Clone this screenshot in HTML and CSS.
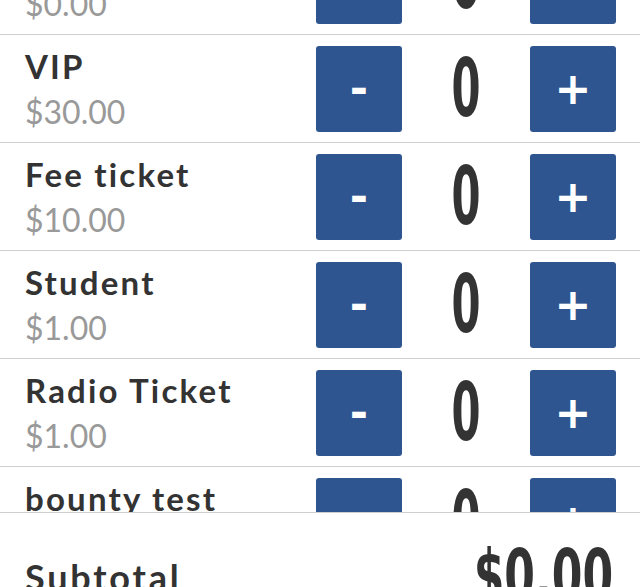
FILE: index.html
```html
<!DOCTYPE html>
<html lang="en">
<head>
<meta charset="utf-8">
<title>Tickets</title>
<link rel="stylesheet" href="styles.css">
</head>
<body>
<div class="app">
  <div class="list">
    <div class="list-inner">
      <div class="row">
        <div class="info"><div class="name">General</div><div class="price">$0.00</div></div>
        <div class="stepper"><button class="btn minus">-</button><span class="count">0</span><button class="btn plus">+</button></div>
      </div>
      <div class="row">
        <div class="info"><div class="name">VIP</div><div class="price">$30.00</div></div>
        <div class="stepper"><button class="btn minus">-</button><span class="count">0</span><button class="btn plus">+</button></div>
      </div>
      <div class="row">
        <div class="info"><div class="name">Fee ticket</div><div class="price">$10.00</div></div>
        <div class="stepper"><button class="btn minus">-</button><span class="count">0</span><button class="btn plus">+</button></div>
      </div>
      <div class="row">
        <div class="info"><div class="name">Student</div><div class="price">$1.00</div></div>
        <div class="stepper"><button class="btn minus">-</button><span class="count">0</span><button class="btn plus">+</button></div>
      </div>
      <div class="row">
        <div class="info"><div class="name">Radio Ticket</div><div class="price">$1.00</div></div>
        <div class="stepper"><button class="btn minus">-</button><span class="count">0</span><button class="btn plus">+</button></div>
      </div>
      <div class="row">
        <div class="info"><div class="name">bounty test</div><div class="price">$0.00</div></div>
        <div class="stepper"><button class="btn minus">-</button><span class="count">0</span><button class="btn plus">+</button></div>
      </div>
    </div>
  </div>
  <div class="footer">
    <div class="subtotal-label">Subtotal</div>
    <div class="subtotal-value"><span class="digits">$0.00</span></div>
  </div>
</div>
</body>
</html>
```
FILE: styles.css
```css
html, body {
  margin: 0;
  padding: 0;
  background: #fff;
}
body {
  height: 587px;
  overflow: hidden;
  font-family: Lato, "Open Sans", sans-serif;
}
.app {
  display: flex;
  flex-direction: column;
  height: 587px;
}
.list {
  height: 512px;
  flex: none;
  overflow: hidden;
}
.list-inner {
  margin-top: -73px;
}
.row {
  display: flex;
  align-items: center;
  height: 107px;
  border-bottom: 1px solid #cfcfcf;
  padding: 0 24px 0 25px;
}
.info {
  flex: 1;
  display: flex;
  flex-direction: column;
  gap: 6px;
}
.name {
  font-size: 33px;
  line-height: 40px;
  font-weight: 700;
  letter-spacing: 2.2px;
  color: #333;
  white-space: nowrap;
}
.price {
  font-size: 32px;
  line-height: 40px;
  color: #999;
}
.stepper {
  display: flex;
  align-items: center;
}
.btn {
  width: 86px;
  height: 86px;
  border: none;
  border-radius: 3px;
  background: #2e558f;
  color: #fff;
  font-family: "DejaVu Sans", sans-serif;
  font-weight: 700;
  font-size: 44px;
  line-height: 1;
  padding: 0;
  display: flex;
  align-items: center;
  justify-content: center;
}
.count {
  width: 128px;
  text-align: center;
  font-family: "DejaVu Sans Condensed", "DejaVu Sans", sans-serif;
  font-weight: 700;
  font-size: 80px;
  line-height: 80px;
  color: #333;
  display: inline-block;
  transform: scaleX(0.58);
}
.footer {
  border-top: 1px solid #cfcfcf;
  display: flex;
  justify-content: space-between;
  align-items: flex-start;
  padding: 0 27px 0 25px;
  flex: none;
}
.subtotal-label {
  margin-top: 44px;
  font-size: 36px;
  line-height: 40px;
  font-weight: 700;
  letter-spacing: 2.8px;
  color: #333;
}
.subtotal-value {
  margin-top: 27px;
  font-family: "DejaVu Sans Condensed", "DejaVu Sans", sans-serif;
  font-weight: 700;
  font-size: 71px;
  line-height: 71px;
  color: #333;
}
.digits {
  display: inline-block;
  transform: scaleX(0.69);
  transform-origin: right center;
}
```
